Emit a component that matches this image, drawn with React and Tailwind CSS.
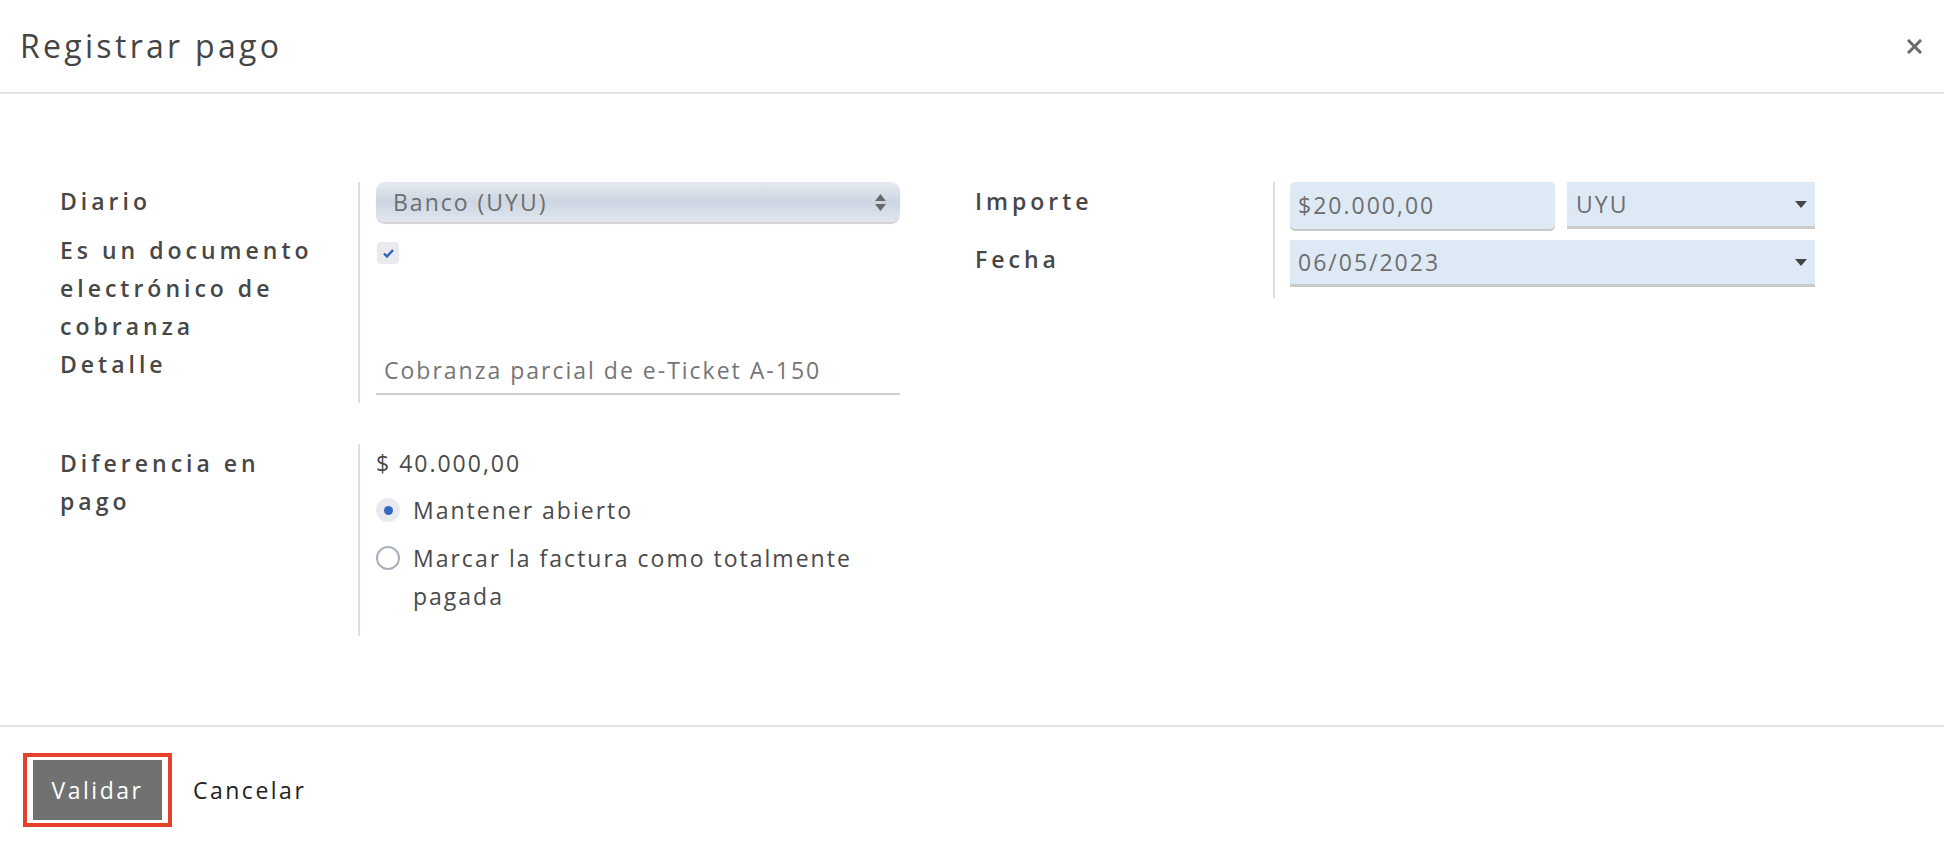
import React from 'react';

const font = { fontFamily: '"Open Sans", "Liberation Sans", sans-serif' };

function Caret() {
  return (
    <svg width="12" height="7" viewBox="0 0 12 7" className="shrink-0">
      <path d="M0 0 L12 0 L6 7 Z" fill="#444" />
    </svg>
  );
}

function Label({ children }) {
  return (
    <div className="text-[23px] leading-[38px] font-semibold tracking-[4px] text-[#474747]">{children}</div>
  );
}

export default function App() {
  return (
    <div className="w-[1944px] h-[852px] bg-white flex flex-col" style={font}>
      {/* header */}
      <div className="h-[92px] flex items-center justify-between pl-[20px] pr-[22px] shrink-0">
        <h4 className="text-[32px] tracking-[3.3px] text-[#454545] font-medium">Registrar pago</h4>
        <button className="w-[16px] h-[16px] flex items-center justify-center">
          <svg width="15" height="15" viewBox="0 0 15 15">
            <path d="M2 2 L13 13 M13 2 L2 13" stroke="#6b6b6b" strokeWidth="3" strokeLinecap="square" />
          </svg>
        </button>
      </div>
      <div className="h-[2px] bg-[#dfe3e8] shrink-0"></div>

      {/* body */}
      <div className="h-[631px] shrink-0 pt-[88px] pl-[60px] flex gap-[75px]">
        <div className="w-[840px] flex flex-col">
          {/* group 1 */}
          <div className="grid grid-cols-[298px_1fr]">
            <div className="h-[49px]"><Label>Diario</Label></div>
            <div className="border-l-2 border-[#dcdfe4] pl-[16px]">
              <div className="h-[40px] w-[524px] rounded-[9px] bg-gradient-to-b from-[#e6eaf0] via-[#cdd6e2] to-[#dfe6ef] shadow-[0_2px_1px_rgba(0,0,0,0.18)] flex items-center justify-between pl-[17px] pr-[14px]">
                <span className="text-[23px] tracking-[2px] text-[#6e6e6e]">Banco (UYU)</span>
                <span className="flex flex-col gap-[3px]">
                  <svg width="11" height="7" viewBox="0 0 11 7"><path d="M0 7 L11 7 L5.5 0 Z" fill="#6a6a6a" /></svg>
                  <svg width="11" height="7" viewBox="0 0 11 7"><path d="M0 0 L11 0 L5.5 7 Z" fill="#6a6a6a" /></svg>
                </span>
              </div>
            </div>

            <div className="h-[114px]">
              <Label>Es un documento<br />electrónico de<br />cobranza</Label>
            </div>
            <div className="border-l-2 border-[#dcdfe4] pl-[17px] pt-[11px]">
              <div className="w-[22px] h-[22px] rounded-[4px] bg-[#e8eaee] flex items-center justify-center">
                <svg width="11" height="9" viewBox="0 0 11 9">
                  <path d="M1 4.5 L4 7.5 L10 1" stroke="#2f65b5" strokeWidth="2.4" fill="none" />
                </svg>
              </div>
            </div>

            <div className="h-[58px]"><Label>Detalle</Label></div>
            <div className="border-l-2 border-[#dcdfe4] pl-[16px]">
              <div className="w-[524px] h-[50px] border-b-2 border-[#cfcfcf] flex items-center pl-[8px] pt-[2px]">
                <span className="text-[23px] tracking-[2px] text-[#757575]">Cobranza parcial de e-Ticket A-150</span>
              </div>
            </div>
          </div>

          {/* group 2 */}
          <div className="grid grid-cols-[298px_1fr] mt-[41px]">
            <div><Label>Diferencia en<br />pago</Label></div>
            <div className="border-l-2 border-[#dcdfe4] pl-[16px] pb-[21px] text-[23px] tracking-[2px] text-[#4a4a4a]">
              <div className="leading-[38px]">$ 40.000,00</div>
              <div className="flex items-center gap-[13px] mt-[9px] leading-[38px]">
                <span className="w-[24px] h-[24px] rounded-full bg-[#e8eaef] flex items-center justify-center">
                  <span className="w-[9px] h-[9px] rounded-full bg-[#3569bd]"></span>
                </span>
                <span>Mantener abierto</span>
              </div>
              <div className="flex items-start gap-[13px] mt-[10px] leading-[38px]">
                <span className="w-[24px] h-[24px] mt-[7px] rounded-full border-2 border-[#a9b0bb] bg-white shrink-0"></span>
                <span>Marcar la factura como totalmente<br />pagada</span>
              </div>
            </div>
          </div>
        </div>

        {/* right group */}
        <div className="w-[840px]">
          <div className="grid grid-cols-[298px_1fr]">
            <div className="h-[58px]"><Label>Importe</Label></div>
            <div className="border-l-2 border-[#dcdfe4] pl-[15px]">
              <div className="flex gap-[12px] w-[525px]">
                <div className="w-[265px] h-[47px] rounded-[5px] bg-[#dee9f6] shadow-[0_2px_0_#c9c9c9] flex items-center pl-[8px]">
                  <span className="text-[23px] tracking-[2px] text-[#6e6e6e]">$20.000,00</span>
                </div>
                <div className="flex-1 h-[47px] bg-[#dee9f6] border-b-[3px] border-[#cbcbcb] flex items-center justify-between pl-[9px] pr-[8px]">
                  <span className="text-[23px] tracking-[2px] text-[#6e6e6e]">UYU</span>
                  <Caret />
                </div>
              </div>
            </div>

            <div className="h-[58px]"><Label>Fecha</Label></div>
            <div className="border-l-2 border-[#dcdfe4] pl-[15px] pb-[11px]">
              <div className="w-[525px] h-[47px] bg-[#dee9f6] border-b-[3px] border-[#cbcbcb] flex items-center justify-between pl-[8px] pr-[8px]">
                <span className="text-[23px] tracking-[2px] text-[#6e6e6e]">06/05/2023</span>
                <Caret />
              </div>
            </div>
          </div>
        </div>
      </div>

      {/* footer */}
      <div className="h-[2px] bg-[#dfe3e8] shrink-0"></div>
      <div className="flex items-center pl-[23px] pt-[26px] gap-[21px]">
        <div className="border-[4px] border-[#e8412a] px-[6px] py-[3px]">
          <button className="w-[129px] h-[60px] bg-[#717171] text-white text-[23px] tracking-[2.5px] flex items-center justify-center">
            Validar
          </button>
        </div>
        <button className="text-[23px] text-[#222] tracking-[2.5px]">Cancelar</button>
      </div>
    </div>
  );
}
